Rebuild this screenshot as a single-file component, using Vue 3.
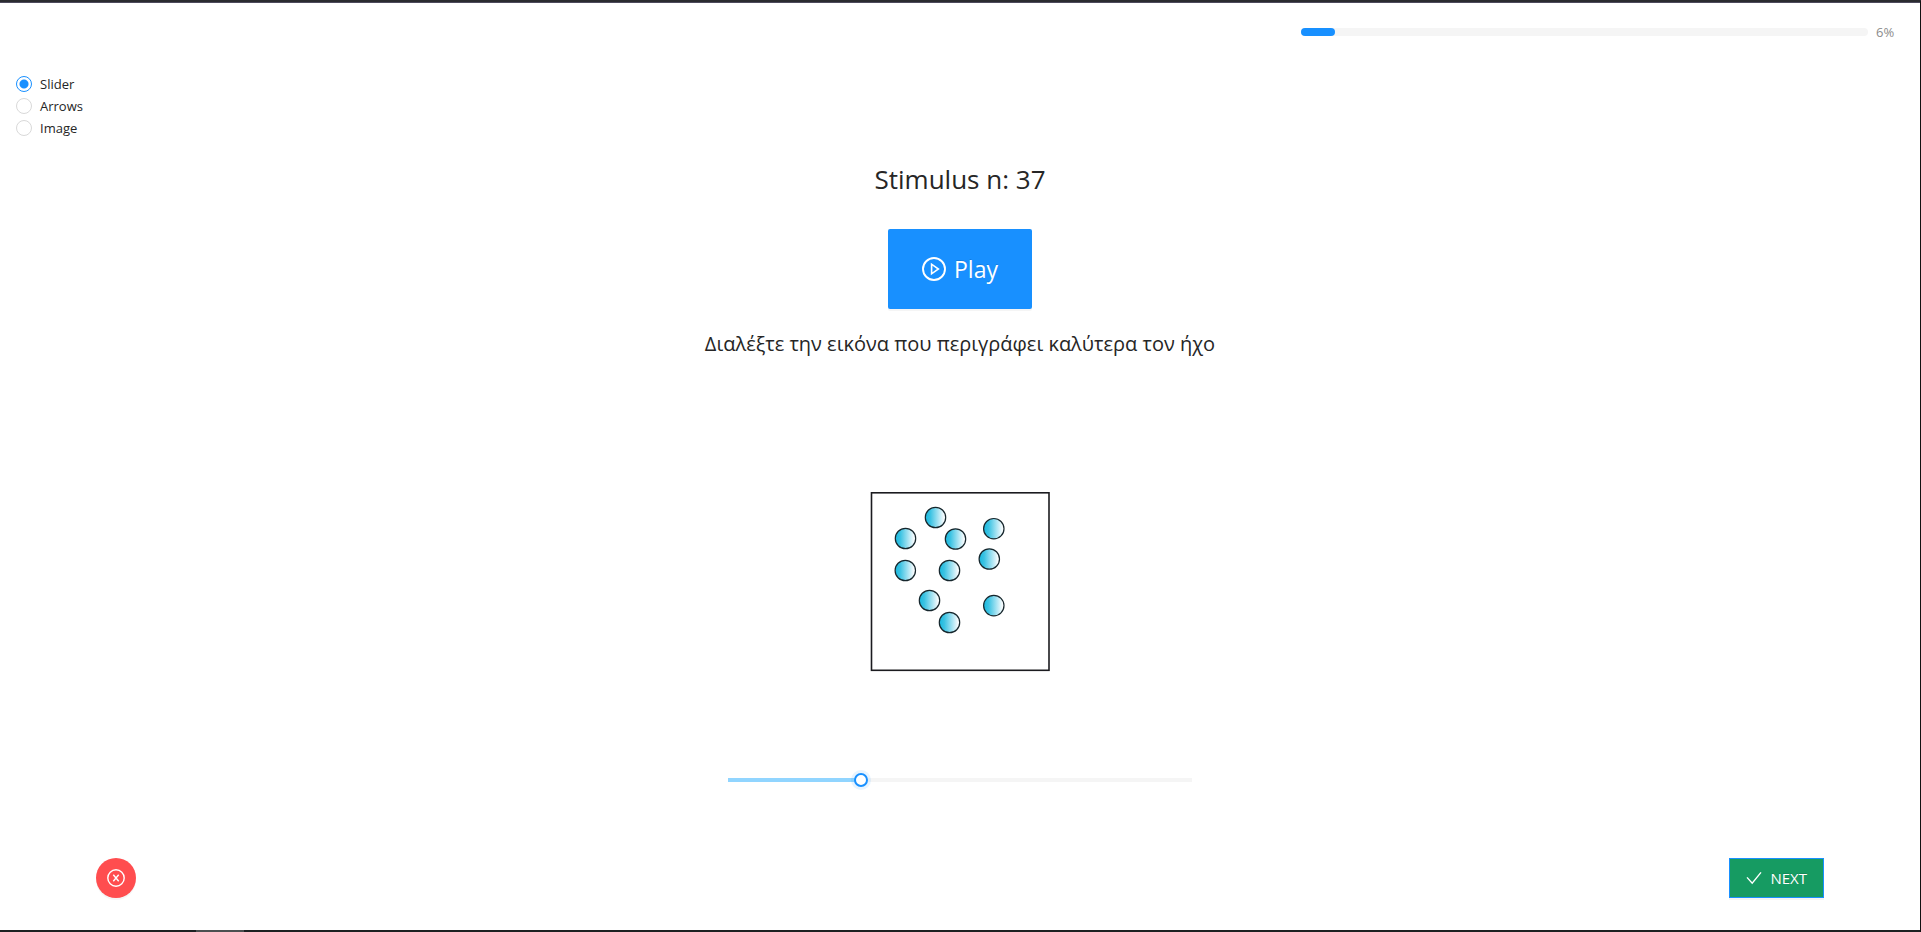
<script setup>
import { computed, ref } from 'vue'

const percent = 6
const modes = ['Slider', 'Arrows', 'Image']
const mode = ref('Slider')
const steps = 7
const level = ref(2)
const fill = computed(() => `${(level.value / steps) * 100}%`)

const dots = [
  [75.5, 37.5],
  [45.5, 58.5],
  [95.5, 59],
  [133.8, 48.7],
  [129.3, 79],
  [45.3, 90.5],
  [89.5, 90.5],
  [69.5, 120.5],
  [133.8, 125.6],
  [89.5, 142.5],
]
</script>

<template>
  <div class="page">
    <header class="top">
      <div class="progress" role="progressbar" aria-label="Progress" :aria-valuenow="percent" aria-valuemin="0" aria-valuemax="100">
        <div class="progress-bar" :style="{ width: percent + '%' }"></div>
      </div>
      <span class="progress-text">{{ percent }}%</span>
    </header>

    <div class="modes" role="radiogroup" aria-label="Response mode">
      <label v-for="m in modes" :key="m" class="mode">
        <input v-model="mode" type="radio" name="mode" :value="m" />
        <span>{{ m }}</span>
      </label>
    </div>

    <main class="trial">
      <h1 class="title">Stimulus n: 37</h1>
      <button class="play" type="button">
        <svg class="play-icon" viewBox="0 0 24 24" fill="none" stroke="currentColor" stroke-width="1.9">
          <circle cx="12" cy="12" r="11" />
          <path d="M9.6 7.2v9.6l6.8-4.8z" stroke-width="1.6" />
        </svg>
        <span>Play</span>
      </button>
      <p class="prompt">Διαλέξτε την εικόνα που περιγράφει καλύτερα τον ήχο</p>

      <svg class="stimulus" viewBox="0 0 200 200" role="img" aria-label="Dots in a square">
        <defs>
          <linearGradient id="dot-fill">
            <stop offset="0" stop-color="#17b8de" />
            <stop offset="0.25" stop-color="#3cc3e3" />
            <stop offset="0.9" stop-color="#f2fafd" />
            <stop offset="1" stop-color="#ffffff" />
          </linearGradient>
        </defs>
        <rect x="11.5" y="12.8" width="177.5" height="177.5" fill="#fff" stroke="#1b1b1f" stroke-width="1.6" />
        <circle v-for="([x, y], i) in dots" :key="i" :cx="x" :cy="y" r="10.2" fill="url(#dot-fill)" stroke="#16262c" stroke-width="1.2" />
      </svg>

      <input v-model.number="level" class="slider" type="range" min="0" :max="steps" aria-label="Picture" :style="{ '--fill': fill }" />
    </main>

    <footer class="actions">
      <button class="cancel" type="button" aria-label="Cancel">
        <svg class="cancel-icon" viewBox="0 0 18 18" fill="none" stroke="currentColor" stroke-width="1.4">
          <circle cx="9" cy="9" r="8.2" />
          <path d="M6.3 5.8l5.4 6.4M11.7 5.8l-5.4 6.4" />
        </svg>
      </button>
      <button class="next" type="button">
        <svg class="next-icon" viewBox="0 0 16 16" fill="none" stroke="currentColor" stroke-width="1.4">
          <path d="M1 7.4l5.2 5.8L15 2.4" />
        </svg>
        <span>NEXT</span>
      </button>
    </footer>

    <div class="taskbar"><span class="taskbar-active"></span></div>
  </div>
</template>

<style>
body {
  background: #fff;
}
</style>

<style scoped>
.page {
  box-sizing: border-box;
  min-height: 100vh;
  display: flex;
  flex-direction: column;
  border-top: 2px solid #2b2b30;
  border-right: 1px solid #111;
  box-shadow: inset 0 1px #4d4a5c;
  background: #fff;
  color: #262626;
  font: 14px/22px "Open Sans", "Noto Sans", sans-serif;
}
button {
  font-family: inherit;
  cursor: pointer;
}
svg {
  flex: none;
}
.top {
  display: flex;
  align-items: center;
  gap: 8px;
  width: 31%;
  box-sizing: border-box;
  margin: 19px 24px 0 auto;
}
.progress {
  flex: 1;
  height: 8px;
  border-radius: 4px;
  background: #f5f5f5;
}
.progress-bar {
  height: 8px;
  border-radius: 4px;
  background: #1890ff;
}
.progress-text {
  width: 20px;
  color: #8c8c8c;
  font-size: 13px;
}
.modes {
  display: flex;
  flex-direction: column;
  align-items: flex-start;
  margin: 30px 0 0 16px;
}
.mode {
  display: flex;
  align-items: center;
  gap: 8px;
  height: 22px;
  font-size: 13px;
}
.mode input {
  appearance: none;
  box-sizing: border-box;
  width: 16px;
  height: 16px;
  margin: 0;
  border: 1px solid #d9d9d9;
  border-radius: 50%;
  background: #fff;
}
.mode input:checked {
  border-color: #1890ff;
  background: radial-gradient(circle, #1890ff 4px, #fff 5px);
}
.trial {
  display: flex;
  flex-direction: column;
  align-items: center;
}
.title {
  margin: 20px 0 30px;
  font-size: 26px;
  font-weight: 400;
  line-height: 40px;
}
.play {
  display: flex;
  align-items: center;
  justify-content: center;
  gap: 8px;
  width: 144px;
  height: 80px;
  padding: 0;
  border: 0;
  border-radius: 2px;
  background: #1890ff;
  box-shadow: 0 2px rgba(0, 0, 0, 0.04);
  color: #fff;
  font-size: 23px;
  text-shadow: 0 -1px rgba(0, 0, 0, 0.12);
}
.play-icon {
  width: 24px;
  height: 24px;
}
.prompt {
  margin: 20px 0 0;
  font-size: 20px;
  line-height: 30px;
}
.stimulus {
  width: 200px;
  height: 200px;
  margin-top: 121px;
}
.slider {
  appearance: none;
  width: 478px;
  max-width: 100%;
  height: 14px;
  margin: 93px 0 0;
  background: transparent;
}
.slider::-webkit-slider-runnable-track {
  box-sizing: border-box;
  height: 14px;
  background: linear-gradient(to right, #91d5ff var(--fill), #f5f5f5 var(--fill)) center / calc(100% - 14px) 4px no-repeat;
}
.slider::-webkit-slider-thumb {
  appearance: none;
  box-sizing: border-box;
  width: 14px;
  height: 14px;
  border: 2px solid #1890ff;
  border-radius: 50%;
  background: #fff;
  box-shadow: 0 0 0 3px rgba(24, 144, 255, 0.1);
}
.actions {
  display: flex;
  justify-content: space-between;
  align-items: center;
  margin: auto 96px 32px;
}
.cancel {
  display: flex;
  align-items: center;
  justify-content: center;
  width: 40px;
  height: 40px;
  padding: 0;
  border: 0;
  border-radius: 50%;
  background: #ff4d4f;
  box-shadow: 0 2px rgba(0, 0, 0, 0.04);
  color: #fff;
}
.cancel-icon {
  width: 18px;
  height: 18px;
}
.next {
  display: flex;
  align-items: center;
  gap: 8px;
  height: 40px;
  padding: 0 16px;
  border: 1px solid #1890ff;
  background: #169b62;
  box-shadow: 0 2px rgba(0, 0, 0, 0.04);
  color: #fff;
  font-size: 15px;
  text-shadow: 0 -1px rgba(0, 0, 0, 0.12);
}
.next-icon {
  width: 16px;
  height: 16px;
}
.taskbar {
  display: flex;
  height: 2px;
  padding-left: 196px;
  background: #1c2122;
}
.taskbar-active {
  width: 48px;
  background: #4b4f50;
}
</style>
